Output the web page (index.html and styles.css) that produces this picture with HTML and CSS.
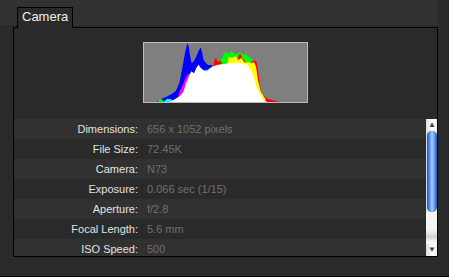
FILE: index.html
```html
<!DOCTYPE html>
<html lang="en">
<head>
  <meta charset="UTF-8" />
  <title>Camera</title>
  <link rel="stylesheet" href="styles.css">
</head>
<body>
  <div class="window">
    <div class="tabs">
      <div class="tabs-pad"></div>
      <div class="tab">Camera</div>
      <div class="tabs-fill"></div>
    </div>

    <div class="painel">
      <div class="histograma">
        <svg viewBox="42 39 489 177" preserveAspectRatio="none" width="163" height="59">
          <!-- envelope esquerdo (azul) -->
          <polygon fill="#0000ff" points="80,216 95,206 110,200 125,192 138,182 148,160 156,120 162,85 167,60 172,40 176,48 180,75 184,98 190,96 198,82 206,62 212,52 216,66 220,88 228,100 236,106 246,104 250,216"/>
          <!-- verde / amarelo / vermelho a direita -->
          <polygon fill="#00ff00" points="240,216 250,96 258,88 266,92 276,86 282,70 288,66 296,72 304,64 312,70 320,74 330,66 338,74 346,72 356,80 364,86 372,96 380,104 386,216"/>
          <polygon fill="#ff0000" points="248,120 252,92 258,84 264,96 270,90 276,100 280,120"/>
          <polygon fill="#ff0000" points="320,110 326,76 332,72 336,84 344,92 350,110"/>
          <polygon fill="#ff0000" points="360,120 366,92 372,94 378,92 382,104 392,180 400,196 412,206 426,210 440,214 450,216 380,216"/>
          <polygon fill="#ffff00" points="290,120 296,80 306,84 316,78 324,90 334,84 344,98 356,96 364,100 372,96 378,110 384,150 392,184 402,200 408,210 400,216 300,216"/>
          <polygon fill="#00ff00" points="380,216 390,196 398,204 404,214"/>
          <!-- magenta / ciano embaixo -->
          <polygon fill="#ff00ff" points="140,216 148,186 156,170 164,150 172,134 182,130 186,216"/>
          <polygon fill="#00ffff" points="100,216 112,206 124,208 130,216"/>
          <polygon fill="#00ff00" points="84,216 90,206 98,210 100,216"/>
          <polygon fill="#00ffff" points="200,216 210,112 222,124 232,118 238,216"/>
          <!-- area branca -->
          <polygon fill="#ffffff" points="118,216 134,208 150,198 160,186 168,160 176,140 184,124 192,130 200,112 206,104 212,114 220,120 230,124 240,114 252,108 264,104 280,102 300,100 320,98 340,100 352,104 360,114 368,130 374,150 380,170 388,188 396,202 404,212 412,216"/>
        </svg>
      </div>

      <div class="rolagem">
        <div class="lista">
          <div class="linha"><span class="rotulo">Dimensions:</span><span class="valor">656 x 1052 pixels</span></div>
          <div class="linha"><span class="rotulo">File Size:</span><span class="valor">72.45K</span></div>
          <div class="linha"><span class="rotulo">Camera:</span><span class="valor">N73</span></div>
          <div class="linha"><span class="rotulo">Exposure:</span><span class="valor">0.066 sec (1/15)</span></div>
          <div class="linha"><span class="rotulo">Aperture:</span><span class="valor">f/2.8</span></div>
          <div class="linha"><span class="rotulo">Focal Length:</span><span class="valor">5.6 mm</span></div>
          <div class="linha"><span class="rotulo">ISO Speed:</span><span class="valor">500</span></div>
        </div>

        <div class="barra">
          <div class="seta">&#9650;</div>
          <div class="polegar"></div>
          <div class="trilho"></div>
          <div class="seta">&#9660;</div>
        </div>
      </div>
    </div>
  </div>
</body>
</html>
```

FILE: styles.css
```css
html, body {
  margin: 0;
  height: 277px;
  overflow: hidden;
}

body {
  font-family: 'Liberation Sans', Arial, sans-serif;
  background: linear-gradient(#323232, #323232) 0 0 / 438px 25px no-repeat, #2a2a2a;
  color: #e6e6e6;
}

.window {
  box-sizing: border-box;
  height: 277px;
  padding: 7px 11px 0 13px;
  border-bottom: 1px solid #000;
}

.tabs {
  display: flex;
  height: 21px;
}

.tabs-pad {
  width: 4px;
  border-bottom: 1px solid #000;
}

.tab {
  box-sizing: border-box;
  width: 56px;
  padding-left: 4px;
  border: 1px solid #000;
  border-bottom: none;
  background: #2a2a2a;
  font-size: 13px;
  line-height: 17px;
  color: #f0f0f0;
}

.tabs-fill {
  flex: 1;
  border-bottom: 1px solid #000;
}

.painel {
  box-sizing: border-box;
  width: 425px;
  height: 229px;
  border: 1px solid #000;
  border-top: none;
  background: #2a2a2a;
  display: flex;
  flex-direction: column;
}

.histograma {
  width: 163px;
  height: 59px;
  margin: 14px auto 16px auto;
  border: 1px solid #bcbcbc;
  background: #7f7f7f;
}

.histograma svg {
  display: block;
}

.rolagem {
  flex: 1;
  display: flex;
  overflow: hidden;
}

.lista {
  flex: 1;
}

.linha {
  display: grid;
  grid-template-columns: 124px 1fr;
  column-gap: 9px;
  height: 20px;
  line-height: 20px;
  font-size: 11px;
}

.linha:nth-child(odd) {
  background: #313131;
}

.rotulo {
  text-align: right;
  color: #e2e2e2;
}

.valor {
  color: #707070;
}

.barra {
  width: 12px;
  margin-right: -1px;
  display: flex;
  flex-direction: column;
  background: linear-gradient(to right, #dcdcdc, #f8f8f8 40%, #ffffff 60%, #e8e8e8);
}

.seta {
  height: 12px;
  font-size: 8px;
  line-height: 12px;
  text-align: center;
  color: #444;
}

.polegar {
  height: 81px;
  margin: 0 1px;
  border-radius: 5px;
  background: linear-gradient(to right, #1a56c8, #4f90ec 25%, #a9ccfa 50%, #5d9cf0 75%, #1c5ace);
  box-shadow: inset 0 0 1px #0a3d9a;
}

.trilho {
  flex: 1;
  background: linear-gradient(#f4f4f4 55%, #d2d2d2 78%, #f6f6f6 92%);
}
```
